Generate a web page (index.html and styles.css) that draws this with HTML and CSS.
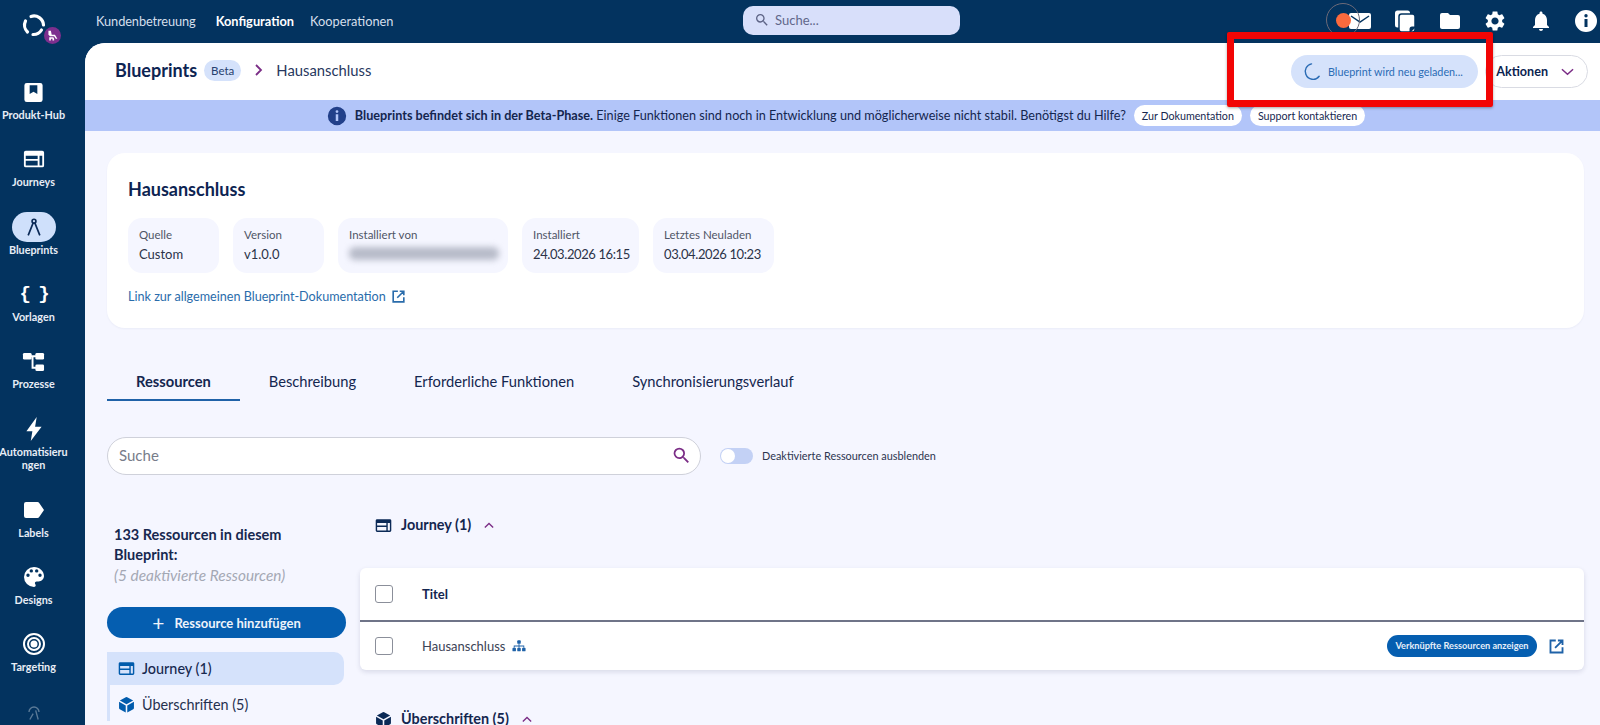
FILE: index.html
```html
<!DOCTYPE html>
<html>
<head>
	<title>Blueprints - Hausanschluss</title>
	<link rel="stylesheet" href="styles.css">
</head>
<body>
	<svg class="defs" width="0" height="0">
		<symbol id="i-journey" viewBox="0 0 24 24"><path fill-rule="evenodd" d="M3 3h18a2 2 0 0 1 2 2v14a2 2 0 0 1-2 2H3a2 2 0 0 1-2-2V5a2 2 0 0 1 2-2zm0 5.500V12h13V8.500zm0 5.500v5h13v-5zm15-5.500V19h3V8.500z"/></symbol>
		<symbol id="i-cube" viewBox="0 0 24 24"><path d="M11 1.600 2.600 6.200l9.400 5.300 9.400-5.300L13 1.600a2 2 0 0 0-2 0zM1.500 8v9a2 2 0 0 0 1 1.700l8.400 4.600V13.300zM22.500 8l-9.400 5.300v10l8.400-4.600a2 2 0 0 0 1-1.700z"/></symbol>
		<symbol id="i-ext" viewBox="0 0 24 24"><path fill="none" stroke="currentColor" stroke-width="2.600" d="M11 3.500H3.500v17h17V13M14 3.500h6.500V10M20 4 10 14"/></symbol>
		<symbol id="i-search" viewBox="0 0 24 24"><path d="M15.500 14h-.79l-.28-.27A6.471 6.471 0 0 0 16 9.500 6.500 6.500 0 1 0 9.500 16c1.610 0 3.090-.59 4.230-1.570l.27.28v.79l5 4.990L20.490 19l-4.990-5zm-6 0C7.010 14 5 11.990 5 9.500S7.010 5 9.500 5 14 7.010 14 9.500 11.990 14 9.500 14z"/></symbol>
		<symbol id="i-info" viewBox="0 0 24 24"><path fill-rule="evenodd" d="M12 1a11 11 0 1 1 0 22 11 11 0 0 1 0-22zm-1.500 9v8h3v-8zM12 5a1.700 1.700 0 1 0 0 3.400A1.700 1.700 0 0 0 12 5z"/></symbol>
	</svg>

	<div class="app">
		<aside class="sidebar">
			<div class="logo">
				<svg class="logo-mark" viewBox="0 0 24 24" width="24" height="24" fill="none" stroke="#fff" stroke-width="3.200" stroke-linecap="round">
					<path d="M9 3.500A9.500 9.500 0 0 1 21.500 12"/>
					<path d="M19.500 17A9.500 9.500 0 0 1 11 21.500"/>
					<path d="M5.500 19A9.500 9.500 0 0 1 3.500 8"/>
				</svg>
				<span class="logo-badge">
					<svg viewBox="0 0 16 16" width="13" height="13" fill="#fff"><path d="M3 2h3l1 5h4l3 5h-2l-2-3H5L3 7zM4 10h5l1 2v2H8v-2H6v2H4z"/></svg>
				</span>
			</div>
			<a class="side-item">
				<span class="side-icon"><svg viewBox="0 0 24 24" width="23" height="23" fill="#fff"><path fill-rule="evenodd" d="M5 2h14a2.500 2.500 0 0 1 2.500 2.500v15A2.500 2.500 0 0 1 19 22H5a2.500 2.500 0 0 1-2.500-2.500v-15A2.500 2.500 0 0 1 5 2zm3 2.500v9l4-2.300 4 2.300v-9z"/></svg></span>
				<span class="side-label">Produkt-Hub</span>
			</a>
			<a class="side-item">
				<span class="side-icon"><svg width="22" height="22" fill="#fff"><use href="#i-journey"/></svg></span>
				<span class="side-label">Journeys</span>
			</a>
			<a class="side-item active">
				<span class="side-icon"><svg viewBox="0 0 24 24" width="20" height="20" fill="none" stroke="#0b2a57" stroke-width="2"><circle cx="12" cy="5" r="2.300"/><path d="M11 7 5 22M13 7l6 15"/></svg></span>
				<span class="side-label">Blueprints</span>
			</a>
			<a class="side-item">
				<span class="side-icon"><span class="braces">{ }</span></span>
				<span class="side-label">Vorlagen</span>
			</a>
			<a class="side-item">
				<span class="side-icon"><svg viewBox="0 0 24 24" width="23" height="23" fill="#fff"><rect x="1" y="3" width="9" height="7" rx="1.500"/><rect x="14" y="3" width="9" height="7" rx="1.500"/><rect x="14" y="15" width="9" height="7" rx="1.500"/><path d="M9 5.500h6v2H12v10h3v2h-5V7.500H9z"/></svg></span>
				<span class="side-label">Prozesse</span>
			</a>
			<a class="side-item">
				<span class="side-icon"><svg viewBox="0 0 24 24" width="26" height="26" fill="#fff"><path d="M14.500 1 5 14h5.500L9 23l10-13h-6z"/></svg></span>
				<span class="side-label">Automatisierungen</span>
			</a>
			<a class="side-item">
				<span class="side-icon"><svg viewBox="0 0 24 24" width="24" height="24" fill="#fff"><path d="M4 4h11.500c.7 0 1.300.3 1.700.9L22 12l-4.800 7.100c-.4.600-1 .9-1.700.9H4a2 2 0 0 1-2-2V6a2 2 0 0 1 2-2z"/></svg></span>
				<span class="side-label">Labels</span>
			</a>
			<a class="side-item">
				<span class="side-icon"><svg viewBox="0 0 24 24" width="24" height="24" fill="#fff"><path d="M12 2a10 10 0 0 0 0 20c.9 0 1.700-.7 1.700-1.700 0-.4-.2-.8-.4-1.100-.3-.3-.4-.7-.4-1.100 0-.9.7-1.700 1.700-1.700h2c3 0 5.400-2.400 5.400-5.400C22 6 17.500 2 12 2zM6 12a1.700 1.700 0 1 1 0-3.400A1.700 1.700 0 0 1 6 12zm3.300-4.400a1.700 1.700 0 1 1 0-3.400 1.700 1.700 0 0 1 0 3.400zm5.400 0a1.700 1.700 0 1 1 0-3.400 1.700 1.700 0 0 1 0 3.400zM18 12a1.700 1.700 0 1 1 0-3.400 1.700 1.700 0 0 1 0 3.400z"/></svg></span>
				<span class="side-label">Designs</span>
			</a>
			<a class="side-item">
				<span class="side-icon"><svg viewBox="0 0 24 24" width="24" height="24" fill="none" stroke="#fff" stroke-width="2"><circle cx="12" cy="12" r="10"/><circle cx="12" cy="12" r="6"/><circle cx="12" cy="12" r="2.500" fill="#fff"/></svg></span>
				<span class="side-label">Targeting</span>
			</a>
			<a class="side-item faded">
				<span class="side-icon"><svg viewBox="0 0 24 24" width="20" height="20" fill="none" stroke="#fff" stroke-width="1.600"><path d="M6 12a6 6 0 0 1 12 0M14 10l3 11M11 14l-4 7"/></svg></span>
			</a>
		</aside>

		<div class="right">
			<header class="topbar">
				<nav class="topnav">
					<a class="first">Kundenbetreuung</a>
					<a class="current">Konfiguration</a>
					<a>Kooperationen</a>
				</nav>
				<div class="top-search">
					<svg width="16" height="16" fill="#5d6385"><use href="#i-search"/></svg>
					<span>Suche...</span>
				</div>
				<div class="top-icons">
					<svg viewBox="0 0 24 24" width="24" height="24"><path fill="#fff" d="M3 4h18a2 2 0 0 1 2 2v12a2 2 0 0 1-2 2H3a2 2 0 0 1-2-2V6a2 2 0 0 1 2-2z"/><path fill="none" stroke="#03335f" stroke-width="1.500" d="m3 7 9 6 9-6"/></svg>
					<svg viewBox="0 0 24 24" width="24" height="24"><rect x="2" y="1.500" width="15" height="17" rx="2.500" fill="#fff"/><rect x="6" y="5" width="16" height="18" rx="2.500" fill="#fff" stroke="#03335f" stroke-width="1.500"/><path d="M22 17.500V19l-4 4h-1.500v-3a2.500 2.500 0 0 1 2.500-2.500z" fill="#03335f"/></svg>
					<svg viewBox="0 0 24 24" width="24" height="24" fill="#fff"><path d="M10 4H4a2 2 0 0 0-2 2v12c0 1.100.9 2 2 2h16a2 2 0 0 0 2-2V8a2 2 0 0 0-2-2h-8z"/></svg>
					<svg viewBox="0 0 24 24" width="24" height="24" fill="#fff"><path d="M19.140 12.940c.04-.3.06-.61.06-.94 0-.32-.02-.64-.07-.94l2.030-1.580c.18-.14.23-.41.12-.61l-1.920-3.320c-.12-.22-.37-.29-.59-.22l-2.390.96c-.5-.38-1.030-.7-1.620-.94l-.36-2.540c-.04-.24-.24-.41-.48-.41h-3.840c-.24 0-.43.17-.47.41l-.36 2.540c-.59.24-1.130.57-1.620.94l-2.390-.96c-.22-.08-.47 0-.59.22L2.740 8.870c-.12.21-.08.47.12.61l2.030 1.580c-.05.3-.09.63-.09.94s.02.64.07.94l-2.030 1.580c-.18.14-.23.41-.12.61l1.920 3.320c.12.22.37.29.59.22l2.390-.96c.5.38 1.030.7 1.620.94l.36 2.540c.05.24.24.41.48.41h3.840c.24 0 .44-.17.47-.41l.36-2.540c.59-.24 1.130-.56 1.620-.94l2.390.96c.22.08.47 0 .59-.22l1.920-3.320c.12-.22.07-.47-.12-.61l-2.010-1.580zM12 15.600c-1.980 0-3.600-1.620-3.600-3.600s1.620-3.600 3.600-3.600 3.600 1.620 3.600 3.600-1.620 3.600-3.600 3.600z"/></svg>
					<svg viewBox="0 0 24 24" width="24" height="24" fill="#fff"><path d="M12 22c1.100 0 2-.9 2-2h-4c0 1.100.9 2 2 2zm6-6v-5c0-3.070-1.630-5.640-4.500-6.320V4c0-.83-.67-1.500-1.500-1.500s-1.500.67-1.500 1.500v.68C7.640 5.360 6 7.920 6 11v5l-2 2v1h16v-1z"/></svg>
					<svg width="24" height="24" fill="#fff"><use href="#i-info"/></svg>
				</div>
			</header>

			<main class="panel">
				<div class="page-head">
					<h1>Blueprints</h1>
					<span class="beta">Beta</span>
					<svg class="crumb-arrow" viewBox="0 0 10 14" width="10" height="14" fill="none" stroke="#7b2d86" stroke-width="1.800"><path d="m2 2 5 5-5 5"/></svg>
					<span class="crumb">Hausanschluss</span>
					<div class="head-actions">
						<div class="loading">
							<svg viewBox="0 0 20 20" width="19" height="19" fill="none" stroke="#2b6cb5" stroke-width="1.500" stroke-linecap="round"><path d="M9 2a8 8 0 0 0 -6 11a8 8 0 0 0 14 2"/></svg>
							<span>Blueprint wird neu geladen...</span>
						</div>
						<button class="actions">Aktionen
							<svg viewBox="0 0 14 8" width="13" height="8" fill="none" stroke="#7b2d86" stroke-width="1.600"><path d="m1 1 6 5.500L13 1"/></svg>
						</button>
					</div>
				</div>

				<div class="banner">
					<svg width="20" height="20" fill="#22408a"><use href="#i-info"/></svg>
					<p><b>Blueprints befindet sich in der Beta-Phase.</b> Einige Funktionen sind noch in Entwicklung und möglicherweise nicht stabil. Benötigst du Hilfe?</p>
					<a class="chip">Zur Dokumentation</a>
					<a class="chip">Support kontaktieren</a>
				</div>

				<div class="content">
					<section class="card">
						<h2>Hausanschluss</h2>
						<div class="tiles">
							<div class="tile w-source"><small>Quelle</small><span>Custom</span></div>
							<div class="tile w-version"><small>Version</small><span>v1.0.0</span></div>
							<div class="tile w-user"><small>Installiert von</small><i class="blurred"></i></div>
							<div class="tile w-date"><small>Installiert</small><span>24.03.2026 16:15</span></div>
							<div class="tile w-reload"><small>Letztes Neuladen</small><span>03.04.2026 10:23</span></div>
						</div>
						<a class="doc-link">Link zur allgemeinen Blueprint-Dokumentation
							<svg width="15" height="15"><use href="#i-ext"/></svg>
						</a>
					</section>

					<div class="tabs">
						<a class="tab selected">Ressourcen</a>
						<a class="tab">Beschreibung</a>
						<a class="tab">Erforderliche Funktionen</a>
						<a class="tab">Synchronisierungsverlauf</a>
					</div>

					<div class="filter-row">
						<div class="search">
							<span>Suche</span>
							<svg width="21" height="21" fill="#7b2d86"><use href="#i-search"/></svg>
						</div>
						<span class="toggle"><i></i></span>
						<span class="toggle-label">Deaktivierte Ressourcen ausblenden</span>
					</div>

					<div class="columns">
						<div class="res-side">
							<p class="res-count">133 Ressourcen in diesem Blueprint:</p>
							<p class="res-off">(5 deaktivierte Ressourcen)</p>
							<button class="add-btn"><span class="plus">+</span> Ressource hinzufügen</button>
							<ul class="res-list">
								<li class="on"><svg width="17" height="17" fill="#005bac"><use href="#i-journey"/></svg>Journey (1)</li>
								<li><svg width="17" height="17" fill="#005bac"><use href="#i-cube"/></svg>Überschriften (5)</li>
							</ul>
						</div>
						<div class="res-main">
							<h3 class="group"><svg width="17" height="17" fill="#0b2a57"><use href="#i-journey"/></svg>Journey (1)
								<svg class="caret" viewBox="0 0 12 8" width="10" height="7" fill="none" stroke="#7b2d86" stroke-width="1.600"><path d="m1 6.500 5-5 5 5"/></svg>
							</h3>
							<div class="table">
								<div class="t-row t-head">
									<span class="check"></span>
									<span>Titel</span>
								</div>
								<div class="t-row">
									<span class="check"></span>
									<span class="t-title">Hausanschluss</span>
									<svg viewBox="0 0 16 16" width="14" height="14" fill="#1f62a8"><rect x="6" y="1.500" width="4" height="4" rx="1"/><path d="M7.500 5h1v2.500H14V10h-1V8.500H8.500V10h-1V8.500H3V10H2V7.500h5.500z"/><rect x="0.500" y="10" width="4" height="4" rx="1"/><rect x="6" y="10" width="4" height="4" rx="1"/><rect x="11.500" y="10" width="4" height="4" rx="1"/></svg>
									<a class="linked-btn">Verknüpfte Ressourcen anzeigen</a>
									<svg class="row-ext" width="17" height="17"><use href="#i-ext"/></svg>
								</div>
							</div>
							<h3 class="group second"><svg width="17" height="17" fill="#0b2a57"><use href="#i-cube"/></svg>Überschriften (5)
								<svg class="caret" viewBox="0 0 12 8" width="10" height="7" fill="none" stroke="#7b2d86" stroke-width="1.600"><path d="m1 6.500 5-5 5 5"/></svg>
							</h3>
						</div>
					</div>
				</div>
			</main>
		</div>
	</div>

	<span class="rec-ring"><i></i></span>
	<div class="red-box"></div>
</body>
</html>
```

FILE: styles.css
```css
* {
	box-sizing: border-box;
}
html, body {
	height: 100%;
}
body {
	font-family: Lato, "Open Sans", Arial, sans-serif;
	margin: 0;
	padding: 0;
	background: #03335f;
	color: #0b2350;
	overflow: hidden;
}
h1, h2, h3, p, ul {
	margin: 0;
	padding: 0;
}
.defs {
	position: absolute;
}
.app {
	display: flex;
	height: 725px;
}

/* sidebar */
.sidebar {
	flex: 0 0 85px;
	padding-right: 18px;
	display: flex;
	flex-direction: column;
	align-items: stretch;
	overflow: hidden;
}
.logo {
	position: relative;
	flex: 0 0 79px;
	display: flex;
	justify-content: center;
	padding-top: 13px;
}
.logo-mark {
	flex: none;
}
.logo-badge {
	position: absolute;
	left: 44px;
	top: 27px;
	width: 17px;
	height: 17px;
	border-radius: 50%;
	background: #7d2f8e;
	display: flex;
	align-items: center;
	justify-content: center;
}
.side-item {
	flex: none;
	display: flex;
	flex-direction: column;
	align-items: center;
	margin-bottom: 24.85px;
	color: #fff;
}
.side-icon {
	height: 26px;
	display: flex;
	align-items: center;
	justify-content: center;
}
.side-label {
	margin-top: 3px;
	font-size: 10.8px;
	font-weight: 700;
	line-height: 13.5px;
	width: 70px;
	flex: none;
	text-align: center;
	word-break: break-all;
	color: #e8edf6;
}
.active .side-icon {
	width: 44px;
	height: 30px;
	margin: -2px 0;
	border-radius: 15px;
	background: #cfe0fb;
}
.faded {
	opacity: .35;
}
.braces {
	font-size: 19px;
	font-weight: 700;
	font-family: "Liberation Mono", monospace;
	letter-spacing: -2px;
}

/* top bar */
.right {
	flex: 1;
	display: flex;
	flex-direction: column;
	min-width: 0;
}
.topbar {
	flex: 0 0 43px;
	display: flex;
	align-items: center;
	padding-bottom: 2px;
}
.topnav {
	flex: 0 0 658px;
	display: flex;
	gap: 16px;
	padding-left: 11px;
	font-size: 12.8px;
	color: #d5dfeb;
}
.topnav .first {
	margin-right: 4px;
	letter-spacing: -.1px;
}
.topnav .current {
	color: #fff;
	font-weight: 700;
}
.top-search {
	width: 217px;
	height: 29px;
	margin-bottom: 1px;
	border-radius: 10px;
	background: #d8dffa;
	display: flex;
	align-items: center;
	gap: 5px;
	padding-left: 11px;
	font-size: 13px;
	color: #61678a;
}
.top-icons {
	margin-left: auto;
	padding-right: 2px;
	display: flex;
	gap: 21.3px;
}

/* main panel */
.panel {
	flex: 1;
	min-height: 0;
	background: #f5f6ff;
	border-top-left-radius: 20px;
	overflow: hidden;
}
.page-head {
	height: 57px;
	background: #fff;
	display: flex;
	align-items: center;
	padding: 0 12px 3px 30px;
}
.page-head h1 {
	font-size: 18px;
	font-weight: 700;
	color: #0d2452;
}
.beta {
	margin-left: 7px;
	padding: 3px 7px;
	border-radius: 11px;
	background: #d5e2fb;
	font-size: 11.5px;
	line-height: 15px;
	color: #27406e;
}
.crumb-arrow {
	margin: 0 12px 0 13px;
}
.crumb {
	font-size: 14.8px;
	color: #27375e;
}
.head-actions {
	margin: 3px 0 0 auto;
	display: flex;
	align-items: center;
	gap: 7px;
}
.loading {
	width: 187px;
	height: 33px;
	border-radius: 17px;
	background: #d5e2fb;
	display: flex;
	align-items: center;
	gap: 6px;
	padding-left: 12px;
	font-size: 10.8px;
	color: #2b6cb5;
}
.actions {
	width: 103px;
	height: 33px;
	border: 1px solid #d9dbe3;
	border-radius: 17px;
	background: #fff;
	font: 700 12.6px Lato, Arial, sans-serif;
	color: #0b2350;
	display: flex;
	align-items: center;
	justify-content: flex-end;
	gap: 13px;
	padding: 0 13px 0 0;
}
.banner {
	height: 31px;
	background: #b2c5f9;
	display: flex;
	align-items: center;
	justify-content: center;
	gap: 8px;
	font-size: 12.65px;
	color: #14264f;
	padding-left: 7px;
}
.chip {
	background: #fff;
	border-radius: 11px;
	padding: 3px 8px;
	font-size: 10.7px;
	line-height: 15px;
	color: #17284f;
}

/* content */
.content {
	padding: 22px 16px 0 22px;
}
.card {
	height: 175px;
	background: #fff;
	border-radius: 18px;
	padding: 26px 21px 0;
	box-shadow: 0 1px 2px rgba(40, 50, 110, .05);
}
.card h2 {
	font-size: 18px;
	font-weight: 700;
	line-height: 20px;
	color: #0d2452;
}
.tiles {
	display: flex;
	gap: 14px;
	margin-top: 19px;
}
.tile {
	height: 55px;
	border-radius: 14px;
	background: #f5f6ff;
	padding: 10px 11px 0;
	display: flex;
	flex-direction: column;
	gap: 5px;
	font-size: 13px;
	white-space: nowrap;
	color: #2b3348;
}
.tile small {
	font-size: 11.5px;
	color: #4f5566;
}
.w-source, .w-version {
	width: 91px;
}
.w-user {
	width: 170px;
}
.w-date {
	width: 117px;
}
.w-reload {
	width: 121px;
}
.w-date span, .w-reload span {
	letter-spacing: -.4px;
}
.blurred {
	display: block;
	width: 150px;
	height: 13px;
	margin-top: 1px;
	border-radius: 6px;
	background: #b7bbc9;
	filter: blur(3px);
}
.doc-link {
	display: flex;
	align-items: center;
	gap: 5px;
	margin-top: 16px;
	font-size: 12.6px;
	color: #2a6cab;
}
.tabs {
	display: flex;
	margin-top: 37px;
	height: 36px;
}
.tab {
	padding: 7px 29px 0;
	font-size: 14.7px;
	color: #14264f;
}
.tab.selected {
	font-weight: 700;
	border-bottom: 2px solid #1f62a8;
}
.filter-row {
	display: flex;
	align-items: center;
	margin-top: 36px;
}
.search {
	width: 594px;
	height: 38px;
	border: 1px solid #cfd1da;
	border-radius: 19px;
	background: #fff;
	display: flex;
	align-items: center;
	justify-content: space-between;
	padding: 0 8px 2px 11px;
	font-size: 15px;
	color: #777c8a;
}
.toggle {
	width: 33px;
	height: 16px;
	margin-left: 19px;
	border-radius: 8px;
	background: #c3d1f5;
	display: flex;
	align-items: center;
	padding-left: 1px;
}
.toggle i {
	width: 14px;
	height: 14px;
	border-radius: 50%;
	background: #fff;
}
.toggle-label {
	margin: 0 0 2px 9px;
	font-size: 10.9px;
	color: #2d3550;
}
.columns {
	display: flex;
	margin: 33px 0 0 -1px;
}
.res-side {
	flex: 0 0 254px;
	padding-top: 17px;
}
.res-count {
	width: 210px;
	margin-left: 8px;
	font-size: 14.5px;
	font-weight: 700;
	line-height: 20px;
	color: #17284f;
}
.res-off {
	margin: 0 0 0 8px;
	font-size: 15.4px;
	font-style: italic;
	line-height: 20px;
	color: #a4a8b4;
}
.add-btn {
	width: 239px;
	height: 31px;
	margin: 22px 0 0 1px;
	border: 0;
	border-radius: 16px;
	background: #055eb0;
	color: #eef3fb;
	font: 700 13px Lato, Arial, sans-serif;
	display: flex;
	align-items: center;
	justify-content: center;
	gap: 10px;
}
.plus {
	font-size: 21px;
	font-weight: 400;
	line-height: 20px;
}
.res-list {
	list-style: none;
	margin: 14px 0 0 1px;
	width: 237px;
	border-left: 3px solid #d5e2fb;
}
.res-list li {
	height: 33px;
	display: flex;
	align-items: center;
	gap: 7px;
	padding-left: 8px;
	font-size: 14.4px;
	color: #25304e;
	margin-bottom: 3px;
}
.res-list li.on {
	margin-left: -3px;
	padding-left: 11px;
	background: #d5e2fb;
	border-radius: 0 10px 10px 0;
	color: #17284f;
	font-weight: 500;
}
.res-main {
	flex: 1;
	min-width: 0;
}
.group {
	display: flex;
	align-items: center;
	gap: 9px;
	margin: 7px 0 0 15px;
	font-size: 14.4px;
	font-weight: 700;
	line-height: 20px;
	color: #14264f;
}
.caret {
	margin-left: 4px;
}
.table {
	margin-top: 33px;
	background: #fff;
	border-radius: 6px;
	box-shadow: 0 2px 5px rgba(40, 50, 90, .14);
}
.t-row {
	height: 48px;
	display: flex;
	align-items: center;
	padding: 0 19px 0 15px;
	font-size: 13px;
	color: #3c4356;
}
.t-head {
	height: 54px;
	border-bottom: 2px solid #6f7488;
	font-weight: 700;
	color: #14264f;
}
.check {
	width: 18px;
	height: 18px;
	margin-right: 29px;
	border: 1.500px solid #8b8f9a;
	border-radius: 3px;
	background: #fff;
}
.t-title {
	margin-right: 7px;
}
.linked-btn {
	margin-left: auto;
	height: 22px;
	width: 150px;
	border-radius: 11px;
	background: #055eb0;
	color: #e6eef9;
	font-size: 9.2px;
	font-weight: 700;
	line-height: 22px;
	text-align: center;
}
.row-ext {
	margin-left: 11px;
	color: #1f62a8;
}
.group.second {
	margin-top: 39px;
}

/* overlays from the screen recording */
.rec-ring {
	position: absolute;
	left: 1326px;
	top: 3px;
	width: 34px;
	height: 34px;
	border: 1px solid #6d6a78;
	border-radius: 50%;
	display: flex;
	align-items: center;
	justify-content: center;
}
.rec-ring i {
	width: 15px;
	height: 15px;
	border-radius: 50%;
	background: #fb6a3d;
}
.red-box {
	position: absolute;
	left: 1227px;
	top: 32px;
	width: 266px;
	height: 75px;
	border: 7px solid #f20505;
	border-radius: 2px;
	box-shadow: 0 1px 3px rgba(0, 0, 0, .35);
}
```
